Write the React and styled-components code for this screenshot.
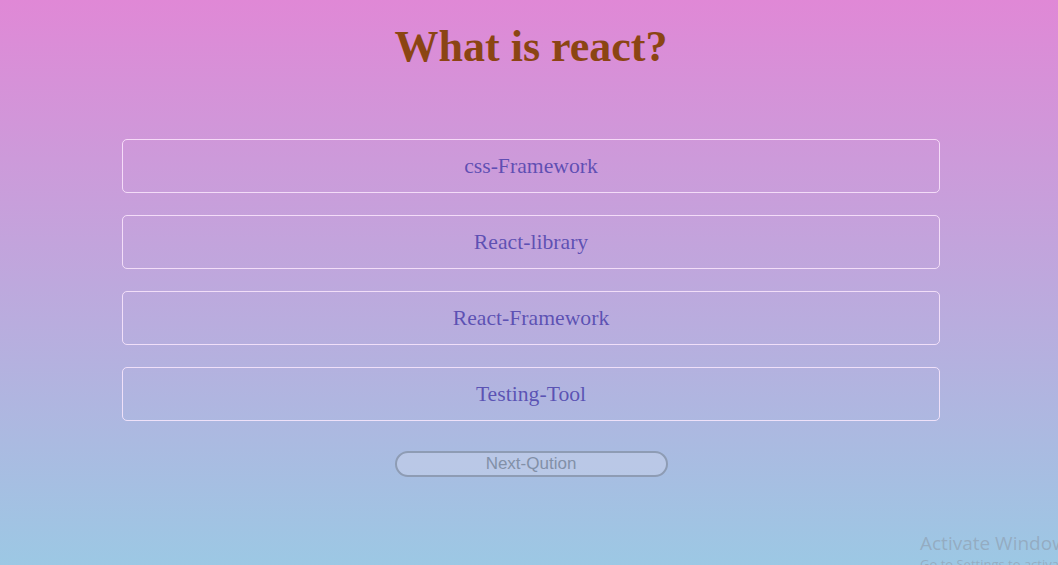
import React from 'react';
import styled, { createGlobalStyle } from 'styled-components';

const GlobalStyle = createGlobalStyle`
  html, body {
    margin: 0;
    padding: 0;
    height: 100%;
  }
  body {
    background: linear-gradient(to bottom, #e088d6 0%, #9cc8e4 100%);
    font-family: 'Liberation Serif', 'Times New Roman', serif;
    overflow: hidden;
  }
`;

const Page = styled.div`
  position: relative;
  height: 565px;
  padding-left: 4px;
  display: flex;
  flex-direction: column;
  align-items: center;
`;

const Title = styled.h1`
  margin: 21px 0 0;
  font-size: 44px;
  font-weight: bold;
  color: #8b4513;
  line-height: 52px;
`;

const OptionList = styled.div`
  width: 818px;
  margin-top: 66px;
  display: flex;
  flex-direction: column;
  gap: 22px;
`;

const Option = styled.div`
  box-sizing: border-box;
  height: 54px;
  border: 1px solid rgba(255, 235, 255, 0.8);
  border-radius: 5px;
  display: flex;
  align-items: center;
  justify-content: center;
  padding-top: 1px;
  font-size: 21.7px;
  color: rgba(72, 61, 170, 0.82);
  cursor: pointer;
`;

const NextButton = styled.button`
  margin-top: 30px;
  width: 273px;
  height: 26px;
  border: 2px solid #8e9cb4;
  border-radius: 13px;
  background: rgba(200, 210, 235, 0.55);
  font-family: 'Liberation Sans', Arial, sans-serif;
  font-size: 17px;
  color: #8290a8;
  padding: 0;
  line-height: 20px;
`;

const Watermark = styled.div`
  position: absolute;
  left: 920px;
  top: 530px;
  font-family: 'Open Sans', 'DejaVu Sans', sans-serif;
  color: rgba(140, 150, 165, 0.55);
  white-space: nowrap;
`;

const WatermarkTitle = styled.div`
  font-size: 19px;
  line-height: 26px;
`;

const WatermarkSub = styled.div`
  font-size: 13px;
  line-height: 16px;
`;

const options = ['css-Framework', 'React-library', 'React-Framework', 'Testing-Tool'];

export default function App() {
  return (
    <>
      <GlobalStyle />
      <Page>
        <Title>What is react?</Title>
        <OptionList>
          {options.map((o) => (
            <Option key={o}>{o}</Option>
          ))}
        </OptionList>
        <NextButton>Next-Qution</NextButton>
        <Watermark>
          <WatermarkTitle>Activate Windows</WatermarkTitle>
          <WatermarkSub>Go to Settings to activate Windows.</WatermarkSub>
        </Watermark>
      </Page>
    </>
  );
}
